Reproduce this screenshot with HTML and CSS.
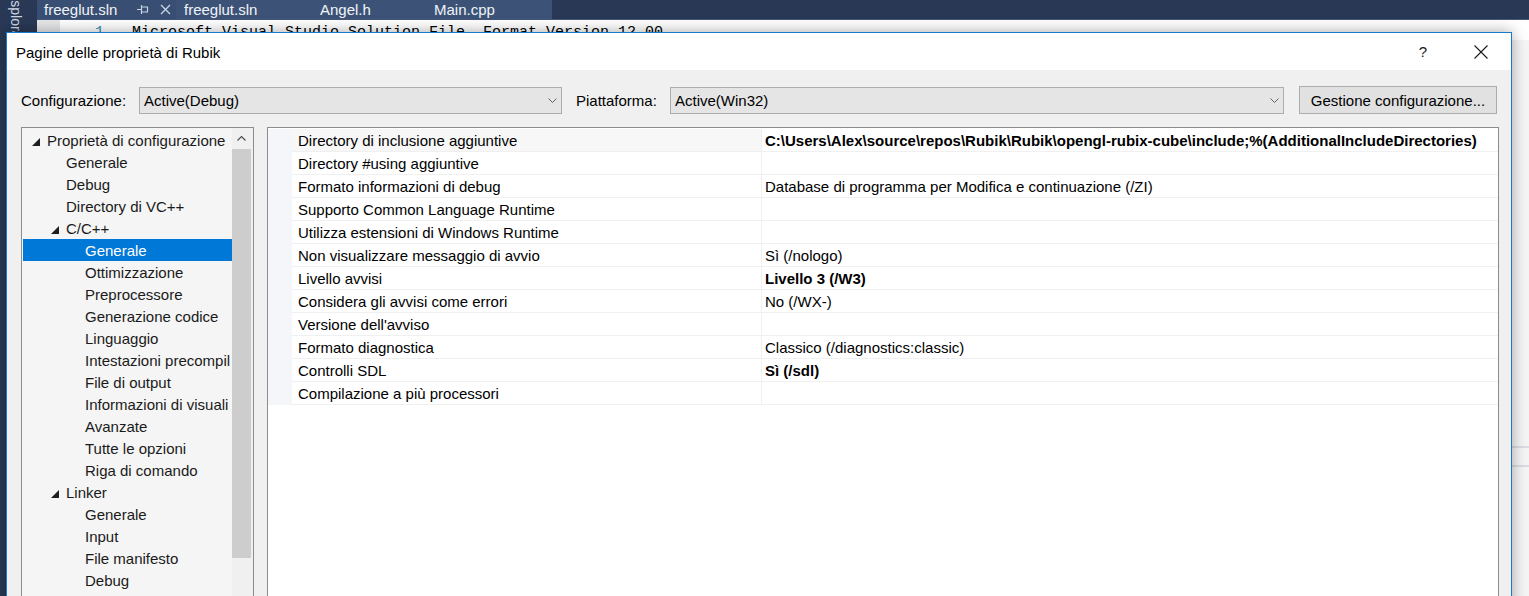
FILE: index.html
```html
<!DOCTYPE html>
<html lang="it">
<head>
<meta charset="utf-8">
<title>Pagine delle proprietà di Rubik</title>
<link rel="stylesheet" href="styles.css">
</head>
<body>
<div class="screen">
  <div class="ide">
    <div class="side"><span class="side-label">Esplora</span></div>
    <div class="main">
      <div class="tabs">
        <div class="tab tab-first">
          <span>freeglut.sln</span>
          <svg class="pin" width="12" height="11" viewBox="0 0 12 11"><path d="M0 5.5H4M4.5 1V10M4.5 3H10.5V8H4.5" fill="none" stroke="#c9d2e3" stroke-width="1.2"/></svg>
          <svg class="tabx" width="11" height="11" viewBox="0 0 11 11"><path d="M1 1L10 10M10 1L1 10" stroke="#c9d2e3" stroke-width="1.4"/></svg>
        </div>
        <div class="tab tab-2"><span>freeglut.sln</span></div>
        <div class="tab tab-3"><span>Angel.h</span></div>
        <div class="tab tab-4"><span>Main.cpp</span></div>
      </div>
      <div class="editor">
        <div class="code-line">
          <div class="margin"></div>
          <div class="lineno">1</div>
          <div class="code">Microsoft Visual Studio Solution File, Format Version 12.00</div>
        </div>
        <div class="find-bar"></div>
      </div>
    </div>
  </div>

  <div class="dialog">
    <div class="titlebar">
      <span class="title">Pagine delle proprietà di Rubik</span>
      <span class="help">?</span>
      <svg class="close" width="14" height="14" viewBox="0 0 14 14"><path d="M0.5 0.5L13.5 13.5M13.5 0.5L0.5 13.5" stroke="#1a1a1a" stroke-width="1.1"/></svg>
    </div>
    <div class="body">
      <div class="config-row">
        <span class="label label-config">Configurazione:</span>
        <div class="combo combo-config">
          <span class="combo-text">Active(Debug)</span>
          <svg class="chev" width="9" height="5" viewBox="0 0 9 5"><path d="M0.5 0.5L4.5 4.5L8.5 0.5" fill="none" stroke="#606060" stroke-width="1"/></svg>
        </div>
        <span class="label label-plat">Piattaforma:</span>
        <div class="combo combo-plat">
          <span class="combo-text">Active(Win32)</span>
          <svg class="chev" width="9" height="5" viewBox="0 0 9 5"><path d="M0.5 0.5L4.5 4.5L8.5 0.5" fill="none" stroke="#606060" stroke-width="1"/></svg>
        </div>
        <button class="btn">Gestione configurazione...</button>
      </div>

      <div class="panels">
        <div class="tree">
          <div class="tree-list">
            <div class="trow lvl0"><span class="arrow"><svg width="8" height="8" viewBox="0 0 8 8"><path d="M8 0V8H0Z" fill="#1e1e1e"/></svg></span>Proprietà di configurazione</div>
            <div class="trow lvl1">Generale</div>
            <div class="trow lvl1">Debug</div>
            <div class="trow lvl1">Directory di VC++</div>
            <div class="trow lvl1x"><span class="arrow"><svg width="8" height="8" viewBox="0 0 8 8"><path d="M8 0V8H0Z" fill="#1e1e1e"/></svg></span>C/C++</div>
            <div class="trow lvl2 selected">Generale</div>
            <div class="trow lvl2">Ottimizzazione</div>
            <div class="trow lvl2">Preprocessore</div>
            <div class="trow lvl2">Generazione codice</div>
            <div class="trow lvl2">Linguaggio</div>
            <div class="trow lvl2">Intestazioni precompil</div>
            <div class="trow lvl2">File di output</div>
            <div class="trow lvl2">Informazioni di visuali</div>
            <div class="trow lvl2">Avanzate</div>
            <div class="trow lvl2">Tutte le opzioni</div>
            <div class="trow lvl2">Riga di comando</div>
            <div class="trow lvl1x"><span class="arrow"><svg width="8" height="8" viewBox="0 0 8 8"><path d="M8 0V8H0Z" fill="#1e1e1e"/></svg></span>Linker</div>
            <div class="trow lvl2">Generale</div>
            <div class="trow lvl2">Input</div>
            <div class="trow lvl2">File manifesto</div>
            <div class="trow lvl2">Debug</div>
          </div>
          <div class="vscroll">
            <div class="sc-up"><svg width="9" height="5" viewBox="0 0 9 5"><path d="M0.5 4.5L4.5 0.5L8.5 4.5" fill="none" stroke="#505050" stroke-width="1.2"/></svg></div>
            <div class="sc-thumb"></div>
          </div>
        </div>

        <div class="grid">
          <div class="grow first"><div class="gcell gut"></div><div class="gcell name">Directory di inclusione aggiuntive</div><div class="gcell val bold">C:\Users\Alex\source\repos\Rubik\Rubik\opengl-rubix-cube\include;%(AdditionalIncludeDirectories)</div></div>
          <div class="grow"><div class="gcell gut"></div><div class="gcell name">Directory #using aggiuntive</div><div class="gcell val"></div></div>
          <div class="grow"><div class="gcell gut"></div><div class="gcell name">Formato informazioni di debug</div><div class="gcell val">Database di programma per Modifica e continuazione (/ZI)</div></div>
          <div class="grow"><div class="gcell gut"></div><div class="gcell name">Supporto Common Language Runtime</div><div class="gcell val"></div></div>
          <div class="grow"><div class="gcell gut"></div><div class="gcell name">Utilizza estensioni di Windows Runtime</div><div class="gcell val"></div></div>
          <div class="grow"><div class="gcell gut"></div><div class="gcell name">Non visualizzare messaggio di avvio</div><div class="gcell val">Sì (/nologo)</div></div>
          <div class="grow"><div class="gcell gut"></div><div class="gcell name">Livello avvisi</div><div class="gcell val bold">Livello 3 (/W3)</div></div>
          <div class="grow"><div class="gcell gut"></div><div class="gcell name">Considera gli avvisi come errori</div><div class="gcell val">No (/WX-)</div></div>
          <div class="grow"><div class="gcell gut"></div><div class="gcell name">Versione dell'avviso</div><div class="gcell val"></div></div>
          <div class="grow"><div class="gcell gut"></div><div class="gcell name">Formato diagnostica</div><div class="gcell val">Classico (/diagnostics:classic)</div></div>
          <div class="grow"><div class="gcell gut"></div><div class="gcell name">Controlli SDL</div><div class="gcell val bold">Sì (/sdl)</div></div>
          <div class="grow"><div class="gcell gut"></div><div class="gcell name">Compilazione a più processori</div><div class="gcell val"></div></div>
        </div>
      </div>
    </div>
  </div>
</div>
</body>
</html>
```

FILE: styles.css
```css
* { box-sizing: border-box; }

html, body {
  margin: 0;
  padding: 0;
}

body {
  width: 1529px;
  height: 596px;
  overflow: hidden;
  font-family: "Liberation Sans", Arial, sans-serif;
  font-size: 15px;
  color: #1a1a1a;
  background: #293955;
}

.screen {
  position: relative;
  width: 1529px;
  height: 596px;
  overflow: hidden;
}

/* ---------- IDE background ---------- */
.ide {
  display: flex;
  height: 596px;
}

.side {
  width: 37px;
  flex: none;
  background: #293955;
  overflow: hidden;
  padding-left: 8px;
}

.side-label {
  display: block;
  writing-mode: vertical-rl;
  font-size: 14px;
  line-height: 15px;
  color: #ced5e2;
  margin-top: -9px;
  white-space: nowrap;
}

.main {
  flex: 1;
  display: flex;
  flex-direction: column;
}

.tabs {
  height: 20px;
  display: flex;
  background: #293955;
  border-bottom: 1px solid #44587a;
}

.tab {
  display: flex;
  align-items: center;
  height: 19px;
  color: #f0f3f8;
  font-size: 15px;
  background: #3c5377;
  white-space: nowrap;
}

.tab-first { width: 139px; padding-left: 7px; background: #384e72; }
.tab-first .pin { margin-left: 20px; margin-top: -1px; }
.tab-first .tabx { margin-left: 11px; margin-top: -1px; }
.tab-2 { width: 136px; padding-left: 8px; }
.tab-3 { width: 114px; padding-left: 8px; }
.tab-4 { width: 126px; padding-left: 8px; }

.editor {
  flex: 1;
  background: #f5f5f5;
}

.code-line {
  display: flex;
  height: 20px;
  background: #ffffff;
  font-family: "Liberation Mono", "Courier New", monospace;
  font-size: 15px;
  line-height: 20px;
  padding-top: 3px;
}

.margin {
  width: 23px;
  height: 17px;
  margin-top: -3px;
  background: #e6e7e8;
}

.lineno {
  width: 72px;
  text-align: right;
  padding-right: 28px;
  color: #2b91af;
}

.code {
  color: #000;
  white-space: nowrap;
}

.find-bar {
  margin-top: 406px;
  height: 21px;
  border-top: 2px solid #dcdce4;
  border-bottom: 2px solid #dcdce4;
  background: #f5f5f5;
}

/* ---------- Dialog ---------- */
.dialog {
  position: absolute;
  left: 6px;
  top: 32px;
  width: 1506px;
  height: 600px;
  border: 1px solid #1979ca;
  background: #f0f0f0;
  box-shadow: 0 0 14px rgba(0, 0, 0, 0.35);
  display: flex;
  flex-direction: column;
}

.titlebar {
  height: 37px;
  flex: none;
  background: #ffffff;
  display: flex;
  align-items: center;
  padding-left: 9px;
  padding-right: 23px;
}

.title {
  flex: 1;
  color: #000;
  padding-top: 1px;
}

.help {
  color: #1a1a1a;
  margin-right: 47px;
  font-size: 15px;
}

.close { display: block; }

.body {
  flex: 1;
  padding: 16px 14px 0 14px;
}

.config-row {
  display: flex;
  align-items: center;
  height: 28px;
}

.label {
  flex: none;
  color: #000;
}

.label-config { width: 118px; }
.label-plat { width: 94px; margin-left: 14px; }

.combo {
  flex: none;
  height: 27px;
  display: flex;
  align-items: center;
  background: #e5e5e5;
  border: 1px solid #adadad;
  padding-left: 4px;
  padding-right: 4px;
  margin-top: 1px;
}

.combo-config { width: 423px; }
.combo-plat { width: 614px; }

.combo-text {
  flex: 1;
  color: #000;
}

.chev { display: block; }

.btn {
  flex: none;
  width: 198px;
  height: 28px;
  margin-left: 15px;
  background: #e1e1e1;
  border: 1px solid #adadad;
  font-family: "Liberation Sans", Arial, sans-serif;
  font-size: 15px;
  color: #000;
  padding: 0;
}

.panels {
  display: flex;
  margin-top: 13px;
  gap: 13px;
  height: 480px;
}

/* ---------- Tree ---------- */
.tree {
  width: 233px;
  flex: none;
  border: 1px solid #8c8c8c;
  background: #f5f5f5;
  display: flex;
}

.tree-list {
  width: 210px;
  padding-top: 1px;
  overflow: hidden;
}

.trow {
  height: 22px;
  line-height: 22px;
  padding-top: 1px;
  white-space: nowrap;
  color: #1a1a1a;
  display: flex;
  align-items: center;
}

.arrow {
  width: 15px;
  flex: none;
  display: flex;
  align-items: center;
  padding-top: 2px;
}

.lvl0 { padding-left: 10px; }
.lvl1 { padding-left: 44px; }
.lvl1x { padding-left: 29px; }
.lvl2 { padding-left: 63px; }

.selected {
  background: #0078d7;
  color: #ffffff;
  margin: 0 0 0 1px;
  padding-left: 62px;
}

.vscroll {
  width: 21px;
  flex: none;
  background: #f0f0f0;
  display: flex;
  flex-direction: column;
}

.sc-up {
  height: 21px;
  display: flex;
  align-items: center;
  justify-content: center;
  padding-right: 2px;
}

.sc-thumb {
  width: 19px;
  height: 409px;
  background: #cdcdcd;
}

/* ---------- Property grid ---------- */
.grid {
  width: 1232px;
  flex: none;
  border: 1px solid #8c8c8c;
  background: #ffffff;
  padding-top: 1px;
}

.grow {
  display: flex;
  height: 23px;
}

.gcell {
  height: 23px;
  line-height: 22px;
  padding-top: 1px;
  white-space: nowrap;
  overflow: hidden;
}

.gut {
  width: 24px;
  flex: none;
  background: #f4f6f9;
}

.name {
  width: 470px;
  flex: none;
  padding-left: 6px;
  border-right: 1px solid #f0f0f0;
  border-bottom: 1px solid #f0f0f0;
  color: #000;
}

.first .name { background: #f7f7f7; }

.val {
  flex: 1;
  padding-left: 3px;
  border-bottom: 1px solid #f0f0f0;
  color: #000;
}

.bold { font-weight: bold; }
```
